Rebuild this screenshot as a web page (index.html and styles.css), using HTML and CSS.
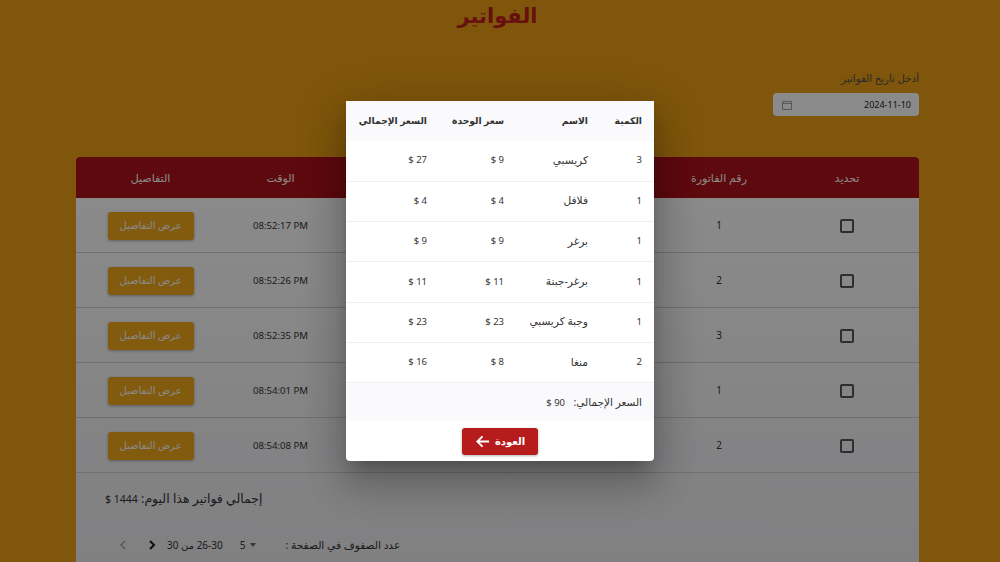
FILE: index.html
```html
<!DOCTYPE html>
<html lang="ar" dir="rtl">
<head>
<meta charset="utf-8">
<title>الفواتير</title>
<link rel="stylesheet" href="styles.css">
</head>
<body>
<main class="page">
  <h1 class="title">الفواتير</h1>
  <div class="date-block">
    <label class="date-label">أدخل تاريخ الفواتير</label>
    <div class="date-input"><span>2024-11-10</span>
      <svg class="cal" viewBox="0 0 12 12"><path d="M1.5 2.5h9v8h-9zM1.500 4.500h9" fill="none" stroke="#a0a2a8" stroke-width="1"/></svg>
    </div>
  </div>
  <section class="card">
    <div class="grid head">
      <div>تحديد</div><div>رقم الفاتورة</div><div></div><div></div><div>الوقت</div><div>التفاصيل</div>
    </div>
    <div class="grid row"><div><i class="check"></i></div><div>1</div><div></div><div></div><div class="time">08:52:17 PM</div><div><button class="details">عرض التفاصيل</button></div></div>
    <div class="grid row"><div><i class="check"></i></div><div>2</div><div></div><div></div><div class="time">08:52:26 PM</div><div><button class="details">عرض التفاصيل</button></div></div>
    <div class="grid row"><div><i class="check"></i></div><div>3</div><div></div><div></div><div class="time">08:52:35 PM</div><div><button class="details">عرض التفاصيل</button></div></div>
    <div class="grid row"><div><i class="check"></i></div><div>1</div><div></div><div></div><div class="time">08:54:01 PM</div><div><button class="details">عرض التفاصيل</button></div></div>
    <div class="grid row"><div><i class="check"></i></div><div>2</div><div></div><div></div><div class="time">08:54:08 PM</div><div><button class="details">عرض التفاصيل</button></div></div>
    <p class="day-total">إجمالي فواتير هذا اليوم: <span class="amount">1444 $</span></p>
    <div class="pager">
      <span class="rows-label">عدد الصفوف في الصفحة :</span>
      <span class="per"><b class="caret"></b><span>5</span></span>
      <span class="range">26-30 من 30</span>
      <svg class="chev" viewBox="0 0 10 12"><path d="M3 2l4 4-4 4" fill="none" stroke="#1c1c20" stroke-width="2"/></svg>
      <svg class="chev off" viewBox="0 0 10 12"><path d="M7 2L3 6l4 4" fill="none" stroke="#9a9a9a" stroke-width="1.3"/></svg>
    </div>
  </section>
</main>
<div class="backdrop"></div>
<div class="modal">
  <table class="items">
    <thead><tr><th>الكمية</th><th>الاسم</th><th>سعر الوحدة</th><th>السعر الإجمالي</th></tr></thead>
    <tbody>
      <tr><td>3</td><td>كريسبي</td><td>9 $</td><td>27 $</td></tr>
      <tr><td>1</td><td>فلافل</td><td>4 $</td><td>4 $</td></tr>
      <tr><td>1</td><td>برغر</td><td>9 $</td><td>9 $</td></tr>
      <tr><td>1</td><td>برغر-جبنة</td><td>11 $</td><td>11 $</td></tr>
      <tr><td>1</td><td>وجبة كريسبي</td><td>23 $</td><td>23 $</td></tr>
      <tr><td>2</td><td>منغا</td><td>8 $</td><td>16 $</td></tr>
    </tbody>
  </table>
  <div class="sum">السعر الإجمالي: &nbsp;<span class="amount">90 $</span></div>
  <div class="actions">
    <button class="back">العودة
      <svg viewBox="0 0 16 16"><path d="M15 8H2.500M8 2.500L2.500 8 8 13.500" fill="none" stroke="#fff" stroke-width="2"/></svg>
    </button>
  </div>
</div>
</body>
</html>
```
FILE: styles.css
```css
* { box-sizing: border-box; }
html, body { margin: 0; height: 562px; overflow: hidden; }
body { background: #eb9f16; font-family: "Noto Sans", "DejaVu Sans", sans-serif; color: #333; position: relative; }
.page { display: flex; flex-direction: column; padding: 0 81px 0 76px; height: 562px; overflow: hidden; }
.title { margin: 0; height: 72px; padding: 1px 0 0 0; text-align: center; color: #c01c1c; font-size: 21px; line-height: 28px; font-weight: 700; flex: none; }
.date-block { display: flex; flex-direction: column; align-items: flex-start; gap: 8px; height: 85px; margin-top: -1px; flex: none; }
.date-label { font-size: 10.200px; line-height: 14px; color: #4a4a4a; }
.date-input { width: 146px; height: 23px; border-radius: 4px; background: #fff; display: flex; align-items: center; justify-content: space-between; padding: 0 8px; font-size: 9px; color: #222; }
.cal { width: 12px; height: 12px; }
.card { background: linear-gradient(#fff 10%, #ebebef 90%); border-radius: 4px; height: 500px; flex: none; margin-top: 1px; }
.grid { display: grid; grid-template-columns: 144px 112px 164px 163px 111px 149px; align-items: center; text-align: center; font-size: 10px; }
.head { height: 41px; background: #ae1219; color: #fff; border-radius: 4px 4px 0 0; font-size: 11px; }
.row { height: 55px; border-bottom: 1px solid #d0d0d0; color: #333; }
.check { display: block; width: 14px; height: 14px; margin: 2px auto 0; border: 2px solid #555; border-radius: 2px; }
.time { direction: ltr; font-size: 9.600px; }
.details { width: 86px; height: 28px; margin-top: 2px; padding: 0 0 2px; border: 0; border-radius: 3px; background: #f0a81c; color: #fff; font: inherit; box-shadow: 0 1px 3px rgba(0,0,0,.3); }
.day-total { margin: 0; padding: 17px 0 0 29px; font-size: 12.500px; text-align: left; }
.amount { font-size: 10.500px; }
.pager { display: flex; align-items: center; justify-content: flex-end; font-size: 10.600px; padding: 31px 0 0 42px; }
.rows-label { margin-left: 29px; }
.per { display: flex; align-items: center; gap: 5px; margin-left: 17px; font-size: 10px; }
.caret { display: block; border: 3.500px solid transparent; border-top: 4px solid #666; border-bottom: 0; }
.chev { width: 10px; height: 12px; }
.range { margin-left: 10px; font-size: 10px; }
.chev.off { margin-right: 19px; }
.backdrop { position: absolute; inset: 0; background: rgba(0,0,0,.46); }
.modal { position: absolute; left: 346px; top: 101px; width: 308px; height: 360px; background: #fff; border-radius: 4px; box-shadow: 0 11px 15px -7px rgba(0,0,0,.25), 0 24px 38px 3px rgba(0,0,0,.16), 0 9px 46px 8px rgba(0,0,0,.14); display: flex; flex-direction: column; }
.items { width: 100%; border-collapse: collapse; font-size: 9.500px; table-layout: fixed; }
.items th { height: 40px; background: #fafafc; font-weight: 700; font-size: 9.200px; color: #333; text-align: right; padding: 0 12px 2px 0; }
.items td { height: 40.300px; border-bottom: 1px solid #f0f0f0; color: #333; padding: 0 12px 2px 0; text-align: right; }
.items td:nth-child(2) { font-size: 10.600px; }
.items th:nth-child(1) { width: 54px; }
.items th:nth-child(2) { width: 84px; }
.items th:nth-child(3) { width: 77px; }
.sum { height: 38px; background: #fafafc; display: flex; align-items: center; padding: 0 12px; font-size: 10.500px; color: #333; }
.sum .amount { font-size: 9.500px; margin-right: 3px; }
.actions { flex: 1; display: flex; justify-content: center; align-items: center; }
.back { width: 76px; height: 27px; border: 0; border-radius: 3px; background: #b71c1c; color: #fff; font: 700 10px "Noto Sans", "DejaVu Sans", sans-serif; display: flex; align-items: center; justify-content: center; gap: 5px; box-shadow: 0 1px 3px rgba(0,0,0,.3); }
.back svg { width: 15px; height: 15px; }
```
